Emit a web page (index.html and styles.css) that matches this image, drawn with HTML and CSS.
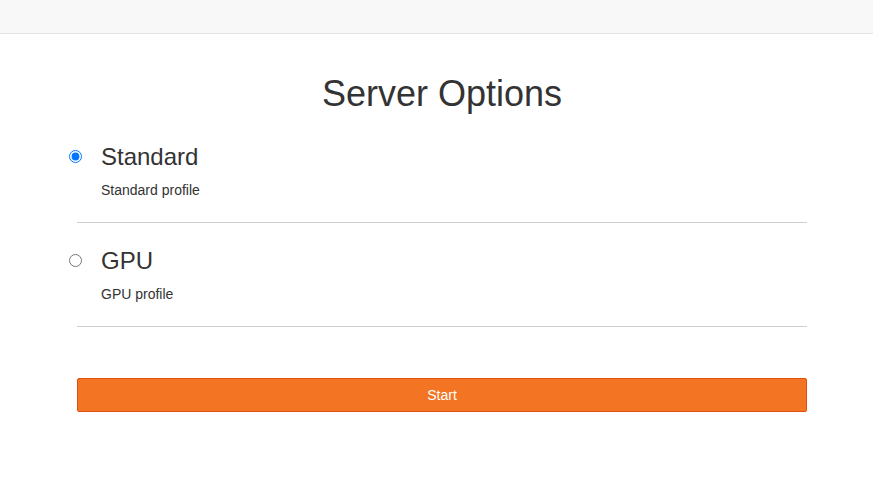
FILE: index.html
```html
<!DOCTYPE html>
<html lang="en">
<head>
<meta charset="utf-8">
<title>Server Options</title>
<link rel="stylesheet" href="styles.css">
</head>
<body>
<nav class="navbar"></nav>
<main class="container">
  <h1 class="title">Server Options</h1>
  <form class="options">
    <label class="option">
      <input class="radio" type="radio" name="profile" value="standard" checked>
      <span class="option-body">
        <span class="option-name">Standard</span>
        <span class="option-desc">Standard profile</span>
      </span>
    </label>
    <hr class="divider">
    <label class="option">
      <input class="radio" type="radio" name="profile" value="gpu">
      <span class="option-body">
        <span class="option-name">GPU</span>
        <span class="option-desc">GPU profile</span>
      </span>
    </label>
    <hr class="divider">
    <button class="btn-start" type="submit">Start</button>
  </form>
</main>
</body>
</html>
```
FILE: styles.css
```css
* { box-sizing: border-box; }
html, body {
  margin: 0;
  padding: 0;
  background: #fff;
  font-family: "Liberation Sans", Arial, sans-serif;
  font-size: 14px;
  color: #333;
}
.navbar {
  height: 34px;
  background: #f8f8f8;
  border-bottom: 1px solid #e2e2e2;
}
.container {
  width: 730px;
  margin-left: 77px;
}
.title {
  margin: 40px 0 0;
  font-size: 36px;
  font-weight: 400;
  line-height: 40px;
  text-align: center;
  color: #333;
}
.options {
  display: flex;
  flex-direction: column;
}
.option {
  display: flex;
  align-items: flex-start;
  margin-top: 29px;
  cursor: pointer;
}
.divider + .option { margin-top: 24px; }
.radio {
  width: 13px;
  height: 13px;
  margin: 7px 19px 0 -8px;
  flex: none;
}
.option-body {
  display: flex;
  flex-direction: column;
}
.option-name {
  padding-top: 1px;
  font-size: 24px;
  line-height: 26px;
}
.option-desc {
  margin-top: 10px;
  font-size: 14px;
  line-height: 20px;
}
.divider {
  margin: 22px 0 0;
  border: 0;
  border-top: 1px solid #cfcfcf;
  height: 0;
}
.btn-start {
  margin-top: 51px;
  height: 34px;
  width: 100%;
  background: #f37524;
  border: 1px solid #e34f0e;
  border-radius: 2px;
  color: #fff;
  font-family: "Liberation Sans", Arial, sans-serif;
  font-size: 14px;
  line-height: 20px;
  padding: 6px 12px;
  cursor: pointer;
}
```
